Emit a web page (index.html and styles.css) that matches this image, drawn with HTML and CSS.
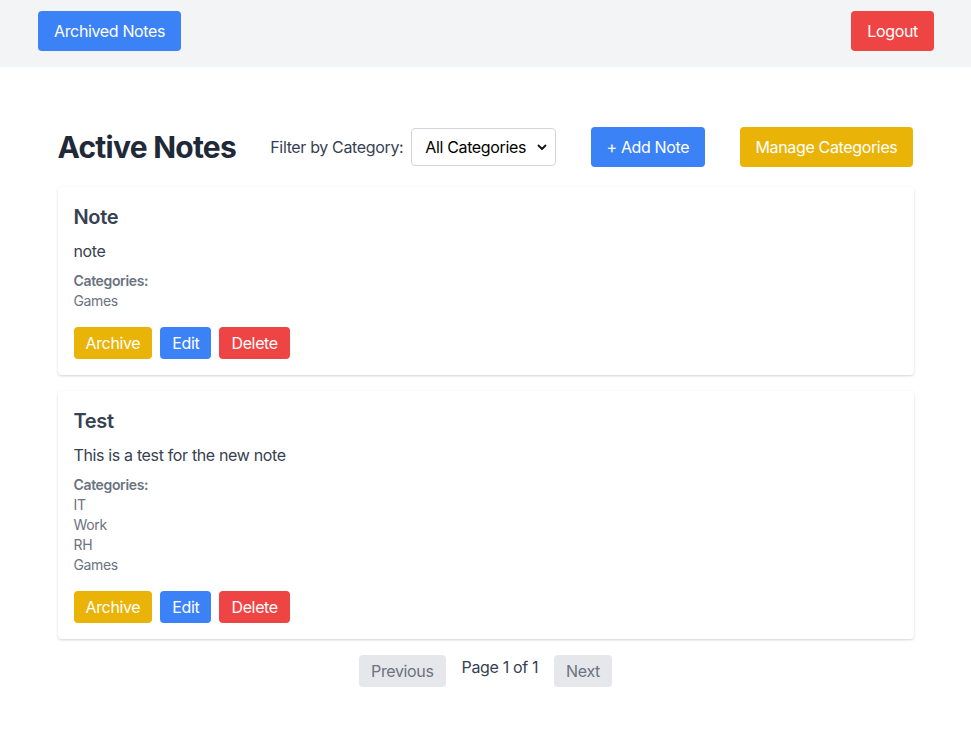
FILE: index.html
```html
<!DOCTYPE html>
<html lang="en">
<head>
<meta charset="utf-8">
<title>Active Notes</title>
<link rel="stylesheet" href="styles.css">
</head>
<body>
<header class="topbar">
  <button class="btn btn-lg btn-blue">Archived Notes</button>
  <button class="btn btn-lg btn-red">Logout</button>
</header>
<main class="container">
  <div class="toolbar">
    <h1 class="title">Active Notes</h1>
    <div class="filter">
      <label class="filter-label" for="cat">Filter by Category:</label>
      <div class="select-wrap">
        <select id="cat" class="select"><option>All Categories</option></select>
        <svg class="chev" width="10" height="7" viewBox="0 0 10 7"><path d="M1.5 1.5 L5 5 L8.5 1.5" fill="none" stroke="#111" stroke-width="1.8" stroke-linecap="round" stroke-linejoin="round"/></svg>
      </div>
    </div>
    <button class="btn btn-lg btn-blue">+ Add Note</button>
    <button class="btn btn-lg btn-yellow">Manage Categories</button>
  </div>

  <div class="card">
    <h2 class="card-title">Note</h2>
    <p class="card-text">note</p>
    <div class="cats">
      <div class="cats-label">Categories:</div>
      <div class="cat">Games</div>
    </div>
    <div class="actions">
      <button class="btn btn-sm btn-yellow">Archive</button>
      <button class="btn btn-sm btn-blue">Edit</button>
      <button class="btn btn-sm btn-red">Delete</button>
    </div>
  </div>

  <div class="card">
    <h2 class="card-title">Test</h2>
    <p class="card-text">This is a test for the new note</p>
    <div class="cats">
      <div class="cats-label">Categories:</div>
      <div class="cat">IT</div>
      <div class="cat">Work</div>
      <div class="cat">RH</div>
      <div class="cat">Games</div>
    </div>
    <div class="actions">
      <button class="btn btn-sm btn-yellow">Archive</button>
      <button class="btn btn-sm btn-blue">Edit</button>
      <button class="btn btn-sm btn-red">Delete</button>
    </div>
  </div>

  <div class="pager">
    <button class="btn btn-sm btn-gray">Previous</button>
    <span class="page-info">Page 1 of 1</span>
    <button class="btn btn-sm btn-gray">Next</button>
  </div>
</main>
</body>
</html>
```

FILE: styles.css
```css
* { box-sizing: border-box; }
html, body { margin: 0; padding: 0; }
body {
  font-family: Inter, "Noto Sans", sans-serif;
  font-size: 16px;
  line-height: 24px;
  letter-spacing: -0.022em;
  color: #111827;
  background: #fff;
}
.topbar {
  background: #f3f4f6;
  height: 67px;
  display: flex;
  justify-content: space-between;
  align-items: flex-start;
  padding: 11px 37px 0 38px;
}
.btn {
  font-family: inherit;
  font-size: 16px;
  line-height: 24px;
  letter-spacing: inherit;
  border: none;
  border-radius: 4px;
  color: #fff;
  cursor: pointer;
  margin: 0;
}
.btn-lg { padding: 8px 16px; }
.btn-sm { padding: 4px 12px; }
.btn-blue { background: #3b82f6; }
.btn-red { background: #ef4444; }
.btn-yellow { background: #eab308; }
.btn-gray { background: #e5e7eb; color: #6b7280; }

.container {
  max-width: 896px;
  margin: 0 auto;
  padding: 60px 20px 20px;
}
.toolbar {
  display: flex;
  justify-content: space-between;
  align-items: center;
  margin-bottom: 20px;
}
.title {
  margin: 0;
  font-size: 30px;
  line-height: 36px;
  font-weight: 700;
  letter-spacing: -0.025em;
  color: #1f2937;
}
.filter { display: flex; align-items: center; }
.filter-label { color: #374151; margin-right: 8px; }
.select-wrap { position: relative; }
.select {
  appearance: none;
  -webkit-appearance: none;
  font-family: inherit;
  font-size: 16px;
  line-height: 20px;
  letter-spacing: inherit;
  color: #000;
  background: #fff;
  border: 1px solid #d1d5db;
  border-radius: 4px;
  width: 145px;
  height: 38px;
  padding: 8px 24px 8px 13px;
  margin: 0;
  display: block;
}
.chev {
  position: absolute;
  right: 9px;
  top: 16px;
  pointer-events: none;
}
.card {
  background: #fff;
  border-radius: 4px;
  box-shadow: 0 1px 3px rgba(0,0,0,0.12), 0 1px 2px rgba(0,0,0,0.06);
  padding: 16px;
  margin-bottom: 16px;
}
.card-title {
  margin: 0 0 8px;
  font-size: 20px;
  line-height: 28px;
  font-weight: 600;
  color: #374151;
}
.card-text { margin: 0; color: #374151; }
.cats { margin-top: 8px; font-size: 14px; line-height: 20px; color: #6b7280; }
.cats-label { font-weight: 600; }
.actions { display: flex; gap: 8px; margin-top: 16px; }
.pager { display: flex; justify-content: center; align-items: flex-start; }
.page-info { margin: 0 16px; color: #374151; }
```
